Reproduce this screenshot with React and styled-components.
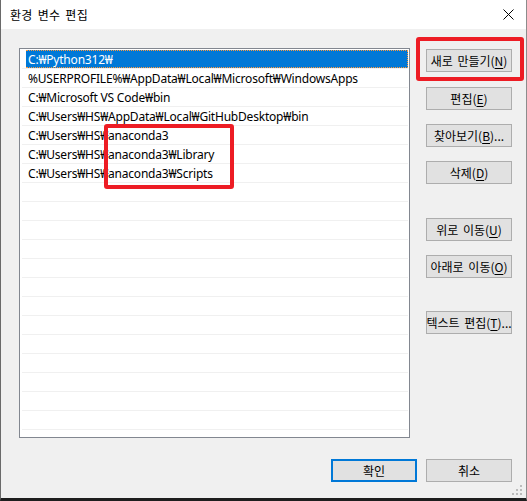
import React from "react";
import styled, { createGlobalStyle } from "styled-components";

const GlobalStyle = createGlobalStyle`
  html, body {
    margin: 0;
    padding: 0;
    background: #1e1e1e;
  }
  body {
    font-family: "Noto Sans", "Noto Sans CJK KR", sans-serif;
    font-size: 12px;
    color: #000;
  }
`;

const Window = styled.div`
  position: relative;
  width: 527px;
  height: 501px;
  box-sizing: border-box;
  background: #f0f0f0;
  border-left: 1px solid #6a6a6a;
  border-right: 1px solid #8c8c8c;
  border-bottom: 3px solid #1e1e1e;
  display: flex;
  flex-direction: column;
  overflow: hidden;
`;

const TitleBar = styled.div`
  height: 29px;
  flex: none;
  background: #fff;
  display: flex;
  align-items: center;
  justify-content: space-between;
  padding: 0 12px 0 9px;
`;

const Title = styled.span`
  font-family: "Noto Sans CJK KR", sans-serif;
  font-size: 12px;
  letter-spacing: 0.3px;
  word-spacing: 2px;
`;

const Close = styled.svg`
  width: 11px;
  height: 11px;
`;

const Body = styled.div`
  display: flex;
  padding: 19px 0 0 18px;
`;

const List = styled.div`
  width: 391px;
  height: 390px;
  box-sizing: border-box;
  border: 1px solid #828790;
  background: #fff;
  padding: 1px 1px 0;
  overflow: hidden;
`;

const Row = styled.div`
  height: 18px;
  border-bottom: 1px solid #f0f0f0;
  margin-left: 1px;
  display: flex;
`;

const Item = styled.div`
  flex: 1;
  margin-left: 4px;
  box-sizing: border-box;
  padding-left: 2px;
  line-height: 17px;
  white-space: nowrap;
  letter-spacing: -0.2px;
  background: ${(p) => (p.$selected ? "#0078d7" : "transparent")};
  color: ${(p) => (p.$selected ? "#fff" : "#000")};
  border: 1px dotted ${(p) => (p.$selected ? "#ff9a3c" : "transparent")};
  border-left-width: 0;
`;

const Side = styled.div`
  display: flex;
  flex-direction: column;
  margin-left: 16px;
  padding-top: 1px;
`;

const Button = styled.div`
  width: 86px;
  height: 23px;
  box-sizing: border-box;
  margin-top: ${(p) => p.$gap || 0}px;
  background: #e1e1e1;
  border: ${(p) => (p.$default ? "2px solid #0078d7" : "1px solid #adadad")};
  display: flex;
  align-items: center;
  justify-content: center;
  font-family: "Noto Sans CJK KR", sans-serif;
  font-size: 12px;
  white-space: pre;
  word-spacing: 2px;

  u {
    text-underline-offset: 2px;
  }
`;

const Footer = styled.div`
  display: flex;
  justify-content: flex-end;
  gap: 9px;
  padding: 21px 14px 0 0;
`;

const Mark = styled.div`
  position: absolute;
  left: ${(p) => p.$x}px;
  top: ${(p) => p.$y}px;
  width: ${(p) => p.$w}px;
  height: ${(p) => p.$h}px;
  box-sizing: border-box;
  border: 4.5px solid #ed1c24;
  border-radius: 3px;
  pointer-events: none;
`;

const Grip = styled.svg`
  position: absolute;
  right: 3px;
  bottom: 2px;
  width: 11px;
  height: 11px;
`;

const paths = [
  "C:₩Python312₩",
  "%USERPROFILE%₩AppData₩Local₩Microsoft₩WindowsApps",
  "C:₩Microsoft VS Code₩bin",
  "C:₩Users₩HS₩AppData₩Local₩GitHubDesktop₩bin",
  "C:₩Users₩HS₩anaconda3",
  "C:₩Users₩HS₩anaconda3₩Library",
  "C:₩Users₩HS₩anaconda3₩Scripts",
];

const rows = [...paths, ...Array(14).fill("")];

const buttons = [
  { label: "새로 만들기", key: "N", gap: 0 },
  { label: "편집", key: "E", gap: 15 },
  { label: "찾아보기", key: "B", gap: 14, more: true },
  { label: "삭제", key: "D", gap: 14 },
  { label: "위로 이동", key: "U", gap: 34 },
  { label: "아래로 이동", key: "O", gap: 14 },
  { label: "텍스트 편집", key: "T", gap: 33, more: true },
];

const App = () => {
  return (
    <>
      <GlobalStyle />
      <Window>
        <TitleBar>
          <Title>환경 변수 편집</Title>
          <Close viewBox="0 0 11 11">
            <path d="M0.5 0.5 L10.5 10.5 M10.5 0.5 L0.5 10.5" stroke="#000" strokeWidth="1" />
          </Close>
        </TitleBar>

        <Body>
          <List>
            {rows.map((text, i) => (
              <Row key={i}>
                <Item $selected={i === 0}>{text}</Item>
              </Row>
            ))}
          </List>

          <Side>
            {buttons.map((b) => (
              <Button key={b.key} $gap={b.gap}>
                {b.label}(<u>{b.key}</u>){b.more && "..."}
              </Button>
            ))}
          </Side>
        </Body>

        <Footer>
          <Button $default>확인</Button>
          <Button>취소</Button>
        </Footer>

        <Mark $x={415} $y={37} $w={108} $h={44} />
        <Mark $x={103} $y={124} $w={130} $h={65} />

        <Grip viewBox="0 0 11 11">
          {[
            [8, 0],
            [8, 4],
            [4, 4],
            [8, 8],
            [4, 8],
            [0, 8],
          ].map(([x, y]) => (
            <rect key={`${x}-${y}`} x={x} y={y} width="2" height="2" fill="#bcbcbc" />
          ))}
        </Grip>
      </Window>
    </>
  );
};

export default App;
